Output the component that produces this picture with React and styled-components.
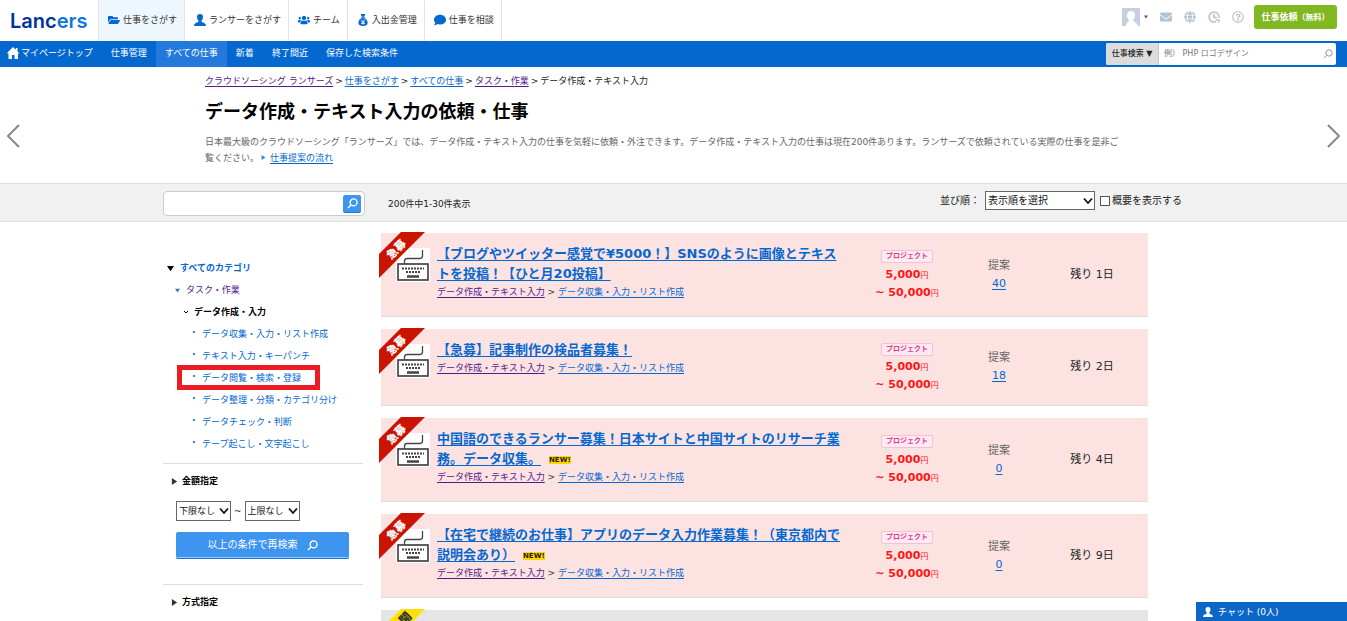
import React from 'react'
import styled, { createGlobalStyle } from 'styled-components'
import { FaFolderOpen, FaUsers, FaComment, FaEnvelope, FaGlobe, FaRegQuestionCircle } from 'react-icons/fa'


const GlobalStyle = createGlobalStyle`
    *, *::before, *::after {
        box-sizing: border-box;
    }
    body {
        margin: 0;
        background: #fff;
        color: #222;
        font-family: "DejaVu Sans", "Noto Sans CJK JP", sans-serif;
        font-size: 9px;
        line-height: 16px;
        text-spacing-trim: space-all;
    }
    h1, h2, h3, p, ul {
        margin: 0;
        padding: 0;
    }
    ul {
        list-style: none;
    }
    button, input, select {
        font: inherit;
        color: inherit;
        margin: 0;
    }
    button {
        cursor: pointer;
        border: 0;
        padding: 0;
    }
`

const Page = styled.div`
    height: 100vh;
    overflow: hidden;
`

/* header */
const Header = styled.header`
    display: flex;
    align-items: center;
    height: 41px;
    padding-right: 10px;
`

const Logo = styled.a`
    width: 98px;
    padding-left: 10px;
    font-family: "Inter", sans-serif;
    font-size: 20px;
    line-height: 36px;
    font-weight: 600;
    color: #003399;
    text-decoration: none;

    span {
        color: #0b76e0;
    }
`

const MainNav = styled.nav`
    display: flex;
    align-self: stretch;
    flex: 1;
    border-left: 1px solid #e2e2e2;
`

const MainLink = styled.a`
    display: flex;
    align-items: center;
    gap: 3px;
    padding: 0 7px 2px 9px;
    border-right: 1px solid #e2e2e2;
    background: ${(props) => (props.$active ? '#eef6fe' : '#fff')};
    color: #333;
    text-decoration: none;

    svg {
        width: 12px;
        height: 12px;
        color: #0468cf;
    }
`

const Tools = styled.div`
    display: flex;
    align-items: center;
    gap: 10px;
    padding-bottom: 7px;
    color: #b4c3d2;
`

const IconButton = styled.button`
    display: flex;
    align-items: center;
    gap: 4px;
    padding-left: 2px;
    background: none;

    svg {
        display: block;
    }
`

const RequestButton = styled.button`
    height: 24px;
    width: 83px;
    border-radius: 3px;
    background: #81b720;
    color: #fff;
    font-weight: 700;

    small {
        font-size: 8px;
    }
`

const SubNav = styled.nav`
    display: flex;
    align-items: center;
    height: 26px;
    padding-right: 11px;
    background: #0468cf;
`

const SubLink = styled.a`
    display: flex;
    align-items: center;
    gap: 2px;
    padding: 0 9px ${(props) => (props.$home ? '2px 7px' : '2px 9px')};
    height: 26px;
    color: #fff;
    text-decoration: none;
    background: ${(props) => (props.$active ? '#2479dc' : 'transparent')};
`

const SiteSearch = styled.form`
    display: flex;
    align-items: center;
    width: 230px;
    height: 22px;
    margin-left: auto;
    border-radius: 2px;
    overflow: hidden;
    background: #fff;
    font-size: 8px;
    color: #999;
    padding-right: 3px;
`

const SearchType = styled.button`
    width: 53px;
    height: 22px;
    background: #dcdcdc;
    border-right: 1px solid #c8c8c8;
    font-weight: 500;
    color: #222;
`

const SearchText = styled.input`
    flex: 1;
    min-width: 0;
    border: 0;
    padding: 0 5px;
    background: transparent;
    outline: none;

    &::placeholder {
        color: #777;
    }
`

/* title area */
const Hero = styled.section`
    display: flex;
    align-items: center;
    justify-content: space-between;
    height: 116px;
    padding: 0 6px;
    color: #888;
`

const HeroBody = styled.div`
    width: 937px;
    align-self: flex-start;
    padding-top: 6px;
`

const Slide = styled.button`
    display: flex;
    background: none;
    padding-top: 22px;
`

const Crumbs = styled.nav`
    display: flex;
    gap: 2px;
    color: #222;
`

const TextLink = styled.a`
    color: ${(props) => (props.$visited ? '#551a8b' : '#0468cf')};
    text-decoration: underline;
    text-underline-offset: 2px;
`

const Heading = styled.h1`
    padding: 9px 0 8px;
    font-size: 18px;
    line-height: 28px;
    color: #000;
`

const Lead = styled.p`
    max-width: 920px;
    color: #666;

    svg {
        margin: 0 4px 0 2px;
        vertical-align: 1px;
    }
`

/* filter bar */
const Bar = styled.section`
    height: 39px;
    border-top: 1px solid #ddd;
    border-bottom: 1px solid #ddd;
    background: #f1f1f1;
`

const Container = styled.div`
    display: flex;
    width: 1021px;
    max-width: 100%;
    margin: 0 auto;
`

const BarRow = styled(Container)`
    height: 37px;
    padding: 7px 2px 0 0;
    align-items: flex-start;
`

const KeywordForm = styled.form`
    display: flex;
    align-items: center;
    width: 202px;
    height: 25px;
    padding: 0 3px;
    border: 1px solid #ccc;
    border-radius: 4px;
    background: #fff;
`

const KeywordButton = styled.button`
    display: flex;
    align-items: center;
    justify-content: center;
    width: 18px;
    height: 18px;
    border-radius: 2px;
    border-bottom: 1px solid #2176cc;
    background: #3d95ef;
    color: #fff;
`

const Count = styled.p`
    flex: 1;
    padding-left: 23px;
    line-height: 26px;
`

const SortArea = styled.div`
    display: flex;
    align-items: center;
    gap: 5px;
    font-size: 10px;
    line-height: 18px;

    label {
        display: flex;
        align-items: center;
        gap: 2px;
    }
`

const CheckBox = styled.input`
    appearance: none;
    width: 10px;
    height: 10px;
    border: 1px solid #555;
    background: ${(props) => (props.checked ? '#0468cf' : '#fff')};
`

const SelectWrap = styled.span`
    position: relative;
    display: inline-flex;

    svg {
        position: absolute;
        right: 2px;
        top: 50%;
        margin-top: -4px;
        pointer-events: none;
    }
`

const SelectBox = styled.select`
    appearance: none;
    width: ${(props) => props.$width};
    height: ${(props) => props.$height};
    padding: 0 2px;
    border: 1px solid #666;
    border-radius: 0;
    background: #fff;
    color: #111;
`

/* sidebar */
const Sidebar = styled.aside`
    width: 200px;
    margin-right: 18px;
    padding-top: 35px;
`

const Category = styled.li`
    position: relative;
    display: flex;
    align-items: center;
    height: 22px;
    gap: 6px;
    padding-left: ${(props) => props.$indent};
    font-weight: ${(props) => (props.$bold ? 700 : 400)};

    a {
        color: ${(props) => props.$color || '#0468cf'};
        text-decoration: none;
    }
`

const Dot = styled.i`
    width: 2px;
    height: 2px;
    margin: 0 1px 4px 0;
    background: #3f86cc;
`

const Marked = styled(Category)`
    &::after {
        content: "";
        position: absolute;
        left: 14px;
        top: -2px;
        width: 143px;
        height: 25px;
        border: 5px solid #ed1c24;
        pointer-events: none;
    }
`

const Group = styled.section`
    margin-top: ${(props) => props.$top};
    padding: 9px 14px 0 13px;
    border-top: 1px solid #ddd;
`

const GroupTitle = styled.h2`
    display: flex;
    align-items: center;
    gap: 4px;
    margin-left: -5px;
    font-size: 9px;
    line-height: 16px;
    color: #000;
`

const Range = styled.div`
    display: flex;
    align-items: center;
    gap: 3px;
    margin: 12px 0 11px;
`

const AgainButton = styled.button`
    display: flex;
    align-items: center;
    justify-content: center;
    gap: 9px;
    width: 100%;
    height: 27px;
    border-bottom: 1px solid #1974d6;
    border-radius: 2px;
    box-shadow: inset 0 -1px 0 #9accff;
    background: #3d95ef;
    color: #fff;
    font-size: 10px;
`

/* results */
const Results = styled.ul`
    flex: 1;
    margin-right: 36px;
    padding-top: 11px;
    display: flex;
    flex-direction: column;
    gap: 12px;
`

const Card = styled.li`
    position: relative;
    display: grid;
    grid-template-columns: 56px 1fr 92px 92px 94px 9px;
    align-items: center;
    border-bottom: 1px solid #dcdcdc;
    background: ${(props) => (props.$closed ? '#e5e5e5' : '#fce3e2')};
`

const Thumb = styled.div`
    align-self: start;
    width: 34px;
    height: 34px;
    margin: 15px 0 0 15px;
    background: #fff;
`

const Ribbon = styled.span`
    position: absolute;
    left: -2px;
    top: -1px;
    display: flex;
    align-items: center;
    justify-content: center;
    width: 46px;
    height: 46px;
    padding: 0 11px 11px 0;
    clip-path: polygon(22px 0, 46px 0, 0 46px, 0 22px);
    background: ${(props) => (props.$closed ? '#ffe100' : '#c81400')};
    color: ${(props) => (props.$closed ? '#333' : '#fff')};
    font-size: ${(props) => (props.$closed ? '12px' : '11px')};
    font-weight: 700;
    white-space: nowrap;

    b {
        transform: rotate(-45deg);
    }
`

const Info = styled.div`
    align-self: start;
    padding: 11px 13px 16px 0;
    color: #333;
`

const Title = styled.h3`
    font-size: 13px;
    line-height: 20px;

    a {
        color: #0468cf;
        text-underline-offset: 2px;
    }
`

const NewBadge = styled.span`
    display: inline-block;
    margin-left: 8px;
    background: #ffd500;
    color: #222;
    font-size: 7px;
    line-height: 8px;
    vertical-align: 1px;
`

const Price = styled.div`
    padding: 11px 0;
    text-align: center;
    color: #ff1414;
    font-size: 11px;
    line-height: 18px;
    font-weight: 700;

    p {
        white-space: nowrap;
    }
    small {
        font-size: 8px;
        line-height: 8px;
        font-weight: 400;
    }
`

const TypeRow = styled.div`
    display: flex;
    align-items: center;
    justify-content: center;
    height: 18px;
`

const TypeTag = styled.span`
    padding: 0 4px;
    border: 1px solid #f4bfd8;
    border-radius: 2px;
    background: #fdeaf3;
    color: #d9417f;
    font-size: 7px;
    line-height: 11px;
`

const Cell = styled.div`
    text-align: center;
    font-size: 11px;
    line-height: 18px;
    color: ${(props) => props.$color || '#222'};
`

const Chat = styled.button`
    position: fixed;
    right: 0;
    bottom: 0;
    display: flex;
    align-items: center;
    gap: 5px;
    width: 151px;
    height: 19px;
    padding-left: 7px;
    background: #0a67c8;
    color: #fff;
`

const Loupe = ({ size, width = 1.5 }) => (
    <svg width={size} height={size} viewBox="0 0 12 12" fill="none" stroke="currentColor" strokeWidth={width} aria-hidden="true">
        <circle cx="7.2" cy="4.8" r="3.8" />
        <path d="M4.4 7.6 1 11" />
    </svg>
)

const Triangle = ({ size, dir, color }) => (
    <svg width={size} height={size} viewBox="0 0 8 8" fill={color} aria-hidden="true">
        <path d={dir === 'down' ? 'M0 1h8L4 7z' : 'M1 0l6 4-6 4z'} />
    </svg>
)

const Person = ({ size = 12 }) => (
    <svg width={size} height={size} viewBox="0 0 12 12" fill="currentColor" aria-hidden="true">
        <path d="M6 0c2 0 3 1.300 3 3 0 1.800-.8 3-1.500 3.700v1.100C8.500 8.600 12 8.800 12 12H0c0-3.200 3.500-3.400 4.500-4.200V6.700C3.800 6 3 4.800 3 3c0-1.700 1-3 3-3z" />
    </svg>
)

const House = () => (
    <svg width="12" height="12" viewBox="0 0 12 12" fill="currentColor" aria-hidden="true">
        <path d="M6 0 0 6l1 .8.500-.4V12H5V8h2.500v4H11V6.400l.4.4.6-.8-1.500-1.600V1H8.800v1.800z" />
    </svg>
)

const MoneyBag = () => (
    <svg viewBox="0 0 24 26" fill="currentColor" aria-hidden="true">
        <path d="M7 0h10l-2 6H9zM8 7h8v2H8z" />
        <path d="M8 9h8c4 3 6 6 6 10 0 5-4 7-10 7S2 24 2 19c0-4 2-7 6-10z" />
        <path d="M8 12l4 5 4-5M12 17v6M8 17.500h8M8 20.500h8" fill="none" stroke="#fff" strokeWidth="1.800" />
    </svg>
)

const Keyboard = () => (
    <svg width="34" height="34" viewBox="0 0 34 34" fill="none" stroke="#444" aria-hidden="true">
        <path d="M26.500 2v6q0 2.500-3 2.500H11q-2.500 0-2.500 3V16" strokeWidth="1.300" />
        <rect x="2" y="16" width="30" height="16" strokeWidth="1.700" />
        <path d="M6 20.500h22" strokeWidth="2" strokeDasharray="2 1" />
        <path d="M10 24h15" strokeWidth="2" strokeDasharray="2 1" />
        <path d="M11 28.500h12" strokeWidth="2.500" />
    </svg>
)

const Arrow = ({ d }) => (
    <svg width="14" height="24" viewBox="0 0 14 24" fill="none" stroke="currentColor" strokeWidth="2" aria-hidden="true">
        <path d={d} />
    </svg>
)

const Select = ({ label, width, height, value }) => (
    <SelectWrap>
        <SelectBox aria-label={label} $width={width} $height={height}>
            <option>{value}</option>
        </SelectBox>
        <svg width="10" height="8" viewBox="0 0 10 8" fill="none" stroke="#111" strokeWidth="1.800" aria-hidden="true">
            <path d="M1 1.500l4 4.500 4-4.500" />
        </svg>
    </SelectWrap>
)

const mainLinks = [
    { text: '仕事をさがす', icon: <FaFolderOpen />, active: true },
    { text: 'ランサーをさがす', icon: <Person /> },
    { text: 'チーム', icon: <FaUsers /> },
    { text: '入出金管理', icon: <MoneyBag /> },
    { text: '仕事を相談', icon: <FaComment /> },
]

const categories = [
    'データ収集・入力・リスト作成',
    'テキスト入力・キーパンチ',
    'データ閲覧・検索・登録',
    'データ整理・分類・カテゴリ分け',
    'データチェック・判断',
    'テープ起こし・文字起こし',
]

const jobs = [
    { title: '【ブログやツイッター感覚で¥5000！】SNSのように画像とテキストを投稿！【ひと月20投稿】', count: 40, days: 1 },
    { title: '【急募】記事制作の検品者募集！', count: 18, days: 2 },
    { title: '中国語のできるランサー募集！日本サイトと中国サイトのリサーチ業務。データ収集。', count: 0, days: 4, isNew: true },
    { title: '【在宅で継続のお仕事】アプリのデータ入力作業募集！（東京都内で説明会あり）', count: 0, days: 9, isNew: true },
]

const Job = ({ job }) => (
    <Card>
        <Thumb><Keyboard /></Thumb>
        <Ribbon><b>急募</b></Ribbon>
        <Info>
            <Title>
                <a href="#job">{job.title}</a>
                {job.isNew && <NewBadge>NEW!</NewBadge>}
            </Title>
            <p>
                <TextLink href="#data" $visited>データ作成・テキスト入力</TextLink>
                {' > '}
                <TextLink href="#list">データ収集・入力・リスト作成</TextLink>
            </p>
        </Info>
        <Price>
            <TypeRow><TypeTag>プロジェクト</TypeTag></TypeRow>
            <p>5,000<small>円</small></p>
            <p>~ 50,000<small>円</small></p>
        </Price>
        <Cell $color="#666">
            <p>提案</p>
            <TextLink href="#proposals">{job.count}</TextLink>
        </Cell>
        <Cell>残り {job.days}日</Cell>
    </Card>
)

const App = () => {
    const [summary, setSummary] = React.useState(false)

    return (
        <Page lang="ja">
            <GlobalStyle />
            <Header>
                <Logo href="#top">Lanc<span>ers</span></Logo>
                <MainNav>
                    {mainLinks.map((link) =>
                        <MainLink href="#nav" key={link.text} $active={link.active}>
                            {link.icon}
                            {link.text}
                        </MainLink>
                    )}
                </MainNav>
                <Tools>
                    <IconButton aria-label="アカウント">
                        <svg width="18" height="18" viewBox="0 0 18 18">
                            <path d="M0 0h18v18H0z" fill="#c5cee2" />
                            <path d="M9 3c3 0 4 2 4 4 0 3-1 4-2 5 0 2 4 2 5 6H4c0-4 3-4 3-6-1-1-2-2-2-5 0-2 1-4 4-4z" fill="#fff" />
                        </svg>
                        <Triangle size={4} dir="down" color="#555" />
                    </IconButton>
                    <IconButton aria-label="メッセージ"><FaEnvelope size={12} color="#b4c3d2" /></IconButton>
                    <IconButton aria-label="お知らせ"><FaGlobe size={12} color="#b4c3d2" /></IconButton>
                    <IconButton aria-label="履歴">
                        <svg width="12" height="12" viewBox="0 0 12 12" fill="none" stroke="#b4c3d2" strokeWidth="1.500">
                            <path d="M11 7A5 5 0 1 0 8 10.700M6 3v3.500h3M7.500 9H11v2.500" />
                        </svg>
                    </IconButton>
                    <IconButton aria-label="ヘルプ"><FaRegQuestionCircle size={12} color="#b4c3d2" /></IconButton>
                    <RequestButton>仕事依頼<small>（無料）</small></RequestButton>
                </Tools>
            </Header>
            <SubNav>
                <SubLink href="#mypage" $home><House />マイページトップ</SubLink>
                <SubLink href="#manage">仕事管理</SubLink>
                <SubLink href="#all" $active>すべての仕事</SubLink>
                <SubLink href="#new">新着</SubLink>
                <SubLink href="#soon">終了間近</SubLink>
                <SubLink href="#saved">保存した検索条件</SubLink>
                <SiteSearch>
                    <SearchType type="button">仕事検索 ▼</SearchType>
                    <SearchText aria-label="検索" placeholder="例） PHP ロゴデザイン" />
                    <Loupe size={10} width={1.2} />
                </SiteSearch>
            </SubNav>

            <Hero>
                <Slide aria-label="前へ"><Arrow d="M13 1 2 12l11 11" /></Slide>
                <HeroBody>
                    <Crumbs>
                        <TextLink href="#top" $visited>クラウドソーシング ランサーズ</TextLink>
                        <span>&gt;</span>
                        <TextLink href="#search">仕事をさがす</TextLink>
                        <span>&gt;</span>
                        <TextLink href="#all">すべての仕事</TextLink>
                        <span>&gt;</span>
                        <TextLink href="#task" $visited>タスク・作業</TextLink>
                        <span>&gt;</span>
                        <span>データ作成・テキスト入力</span>
                    </Crumbs>
                    <Heading>データ作成・テキスト入力の依頼・仕事</Heading>
                    <Lead>
                        日本最大級のクラウドソーシング「ランサーズ」では、データ作成・テキスト入力の仕事を気軽に依頼・外注できます。データ作成・テキスト入力の仕事は現在200件あります。ランサーズで依頼されている実際の仕事を是非ご覧ください。
                        <Triangle size={5} dir="right" color="#2186dd" />
                        <TextLink href="#flow">仕事提案の流れ</TextLink>
                    </Lead>
                </HeroBody>
                <Slide aria-label="次へ"><Arrow d="M1 1l11 11L1 23" /></Slide>
            </Hero>

            <Bar>
                <BarRow>
                    <KeywordForm>
                        <SearchText aria-label="キーワード" />
                        <KeywordButton type="button" aria-label="検索"><Loupe size={11} /></KeywordButton>
                    </KeywordForm>
                    <Count>200件中1-30件表示</Count>
                    <SortArea>
                        <span>並び順：</span>
                        <Select label="並び順" width="110px" height="19px" value="表示順を選択" />
                        <label>
                            <CheckBox type="checkbox" checked={summary} onChange={() => setSummary(!summary)} />
                            概要を表示する
                        </label>
                    </SortArea>
                </BarRow>
            </Bar>

            <Container>
                <Sidebar>
                    <ul>
                        <Category $indent="4px" $bold>
                            <Triangle size={7} dir="down" color="#000" />
                            <a href="#all">すべてのカテゴリ</a>
                        </Category>
                        <Category $indent="12px" $color="#551a8b">
                            <Triangle size={5} dir="down" color="#2a7fc4" />
                            <a href="#task">タスク・作業</a>
                        </Category>
                        <Category $indent="21px" $bold $color="#000">
                            <svg width="4" height="4" viewBox="0 0 4 4" fill="none" stroke="#000">
                                <path d="M0 1l2 2 2-2" />
                            </svg>
                            <a href="#data">データ作成・入力</a>
                        </Category>
                        {categories.map((name, i) => {
                            const Item = i === 2 ? Marked : Category
                            return (
                                <Item key={name} $indent="30px">
                                    <Dot />
                                    <a href="#category">{name}</a>
                                </Item>
                            )
                        })}
                    </ul>
                    <Group $top="8px">
                        <GroupTitle><Triangle size={7} dir="right" color="#333" />金額指定</GroupTitle>
                        <Range>
                            <Select label="下限" width="55px" height="20px" value="下限なし" />
                            ~
                            <Select label="上限" width="55px" height="20px" value="上限なし" />
                        </Range>
                        <AgainButton>以上の条件で再検索<Loupe size={11} /></AgainButton>
                    </Group>
                    <Group $top="25px">
                        <GroupTitle><Triangle size={7} dir="right" color="#333" />方式指定</GroupTitle>
                    </Group>
                </Sidebar>
                <Results>
                    {jobs.map((job) => <Job job={job} key={job.title} />)}
                    <Card $closed>
                        <Thumb><Keyboard /></Thumb>
                        <Ribbon $closed><b>非公開</b></Ribbon>
                    </Card>
                </Results>
            </Container>

            <Chat><Person size={10} />チャット (0人)</Chat>
        </Page>
    )
}

export default App
